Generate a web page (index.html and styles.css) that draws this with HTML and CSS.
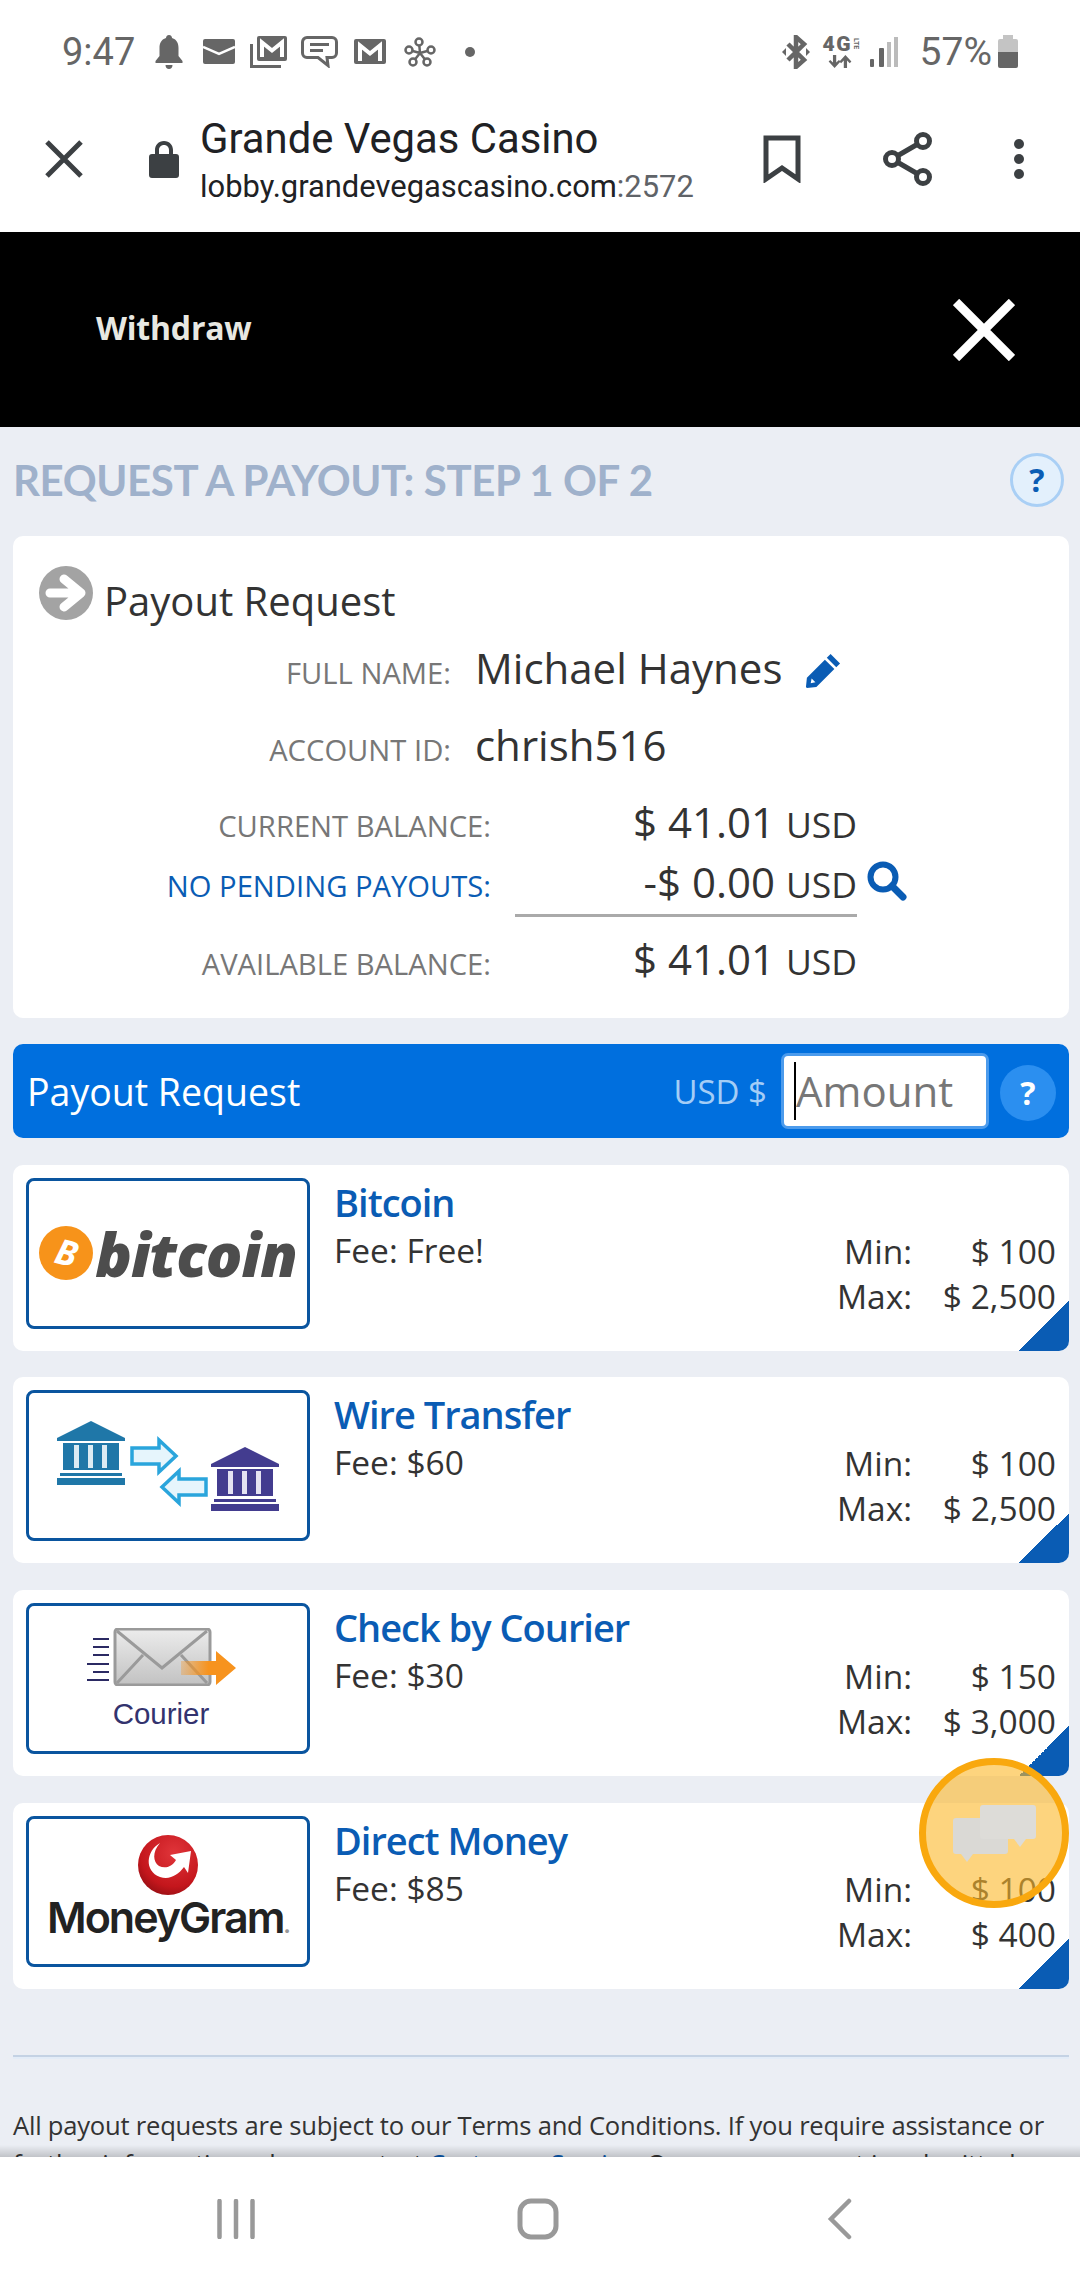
FILE: index.html
```html
<!DOCTYPE html>
<html lang="en">

<head>
  <meta charset="UTF-8">
  <meta name="viewport" content="width=device-width, initial-scale=1.0">
  <title>Withdraw</title>
  <link rel="stylesheet" href="styles.css">
</head>

<body>
  <div class="phone">
    <div class="status-bar">
      <span class="clock">9:47</span>
      <svg class="st-icon" width="28" height="34" viewBox="0 0 28 34"><path fill="#666" d="M14 0c2 0 3 1.500 3 3 5 1.500 6.500 5.500 6.500 10v8l4 5v2H.5v-2l4-5v-8C4.500 8.500 6 4.500 11 3c0-1.500 1-3 3-3zM10.500 30h7c0 2.500-1.500 4-3.500 4s-3.500-1.500-3.500-4z"/></svg>
      <svg class="st-icon gap-20" width="32" height="25" viewBox="0 0 32 25"><rect width="32" height="25" rx="2" fill="#666"/><path d="M0 8l16 7 16-7" fill="none" stroke="#fff" stroke-width="2.500"/></svg>
      <svg class="st-icon gap-15" width="37" height="32" viewBox="0 0 37 32"><path d="M1.500 8v22.500H31" fill="none" stroke="#666" stroke-width="3"/><rect x="7" y="0" width="30" height="25" rx="2" fill="#666"/><path d="M12 21V6.500l10 8 10-8V21" fill="none" stroke="#fff" stroke-width="4"/></svg>
      <svg class="st-icon gap-14" width="37" height="32" viewBox="0 0 37 32"><g fill="none" stroke="#666" stroke-width="3"><path d="M6 1.500h25a4.500 4.500 0 0 1 4.500 4.500v11a4.500 4.500 0 0 1-4.500 4.500h-5l1 8-10-8H6A4.500 4.500 0 0 1 1.500 17V6A4.500 4.500 0 0 1 6 1.500z"/><path d="M9 8.500h19M9 14.500h13"/></g></svg>
      <svg class="st-icon gap-16" width="32" height="25" viewBox="0 0 32 25"><rect width="32" height="25" rx="2" fill="#666"/><path d="M6 22V6.500l10 8 10-8V22" fill="none" stroke="#fff" stroke-width="4"/></svg>
      <svg class="st-icon gap-18" width="32" height="30" viewBox="0 0 32 30"><g fill="#fff" stroke="#666" stroke-width="2.500"><path d="M16 16L15 5M16 16L5 13M16 16L27 13M16 16L9 25M16 16L23 25"/><circle cx="15" cy="5" r="3.500"/><circle cx="5" cy="13" r="3.500"/><circle cx="27" cy="13" r="3.500"/><circle cx="9" cy="25" r="3.500"/><circle cx="23" cy="25" r="3.500"/></g></svg>
      <span class="dot"></span>
      <span class="st-spacer"></span>
      <svg class="st-icon" width="28" height="34" viewBox="0 0 28 34"><g fill="none" stroke="#666" stroke-width="4.500"><path d="M6 9l16 16-8 7V2l8 7L6 25"/></g><path d="M0 17l4-4v8zM28 17l-4-4v8z" fill="#666"/></svg>
      <span class="net gap-13">
        <span class="net-top"><span class="net-4g">4G</span><span class="net-lte">LTE</span></span>
        <svg class="net-arrows" width="24" height="13" viewBox="6 20 21 12"><path fill="#666" d="M10 20h3v7l2.500-2.500L17 26l-5.500 6L6 26l1.500-1.500L10 27zM23 32h-3v-7l-2.500 2.500L16 26l5.500-6 5.500 6-1.500 1.500L23 25z"/></svg>
      </span>
      <svg class="st-icon gap-7" width="28" height="30" viewBox="0 0 28 30"><g fill="#666"><rect x="0" y="22" width="4" height="8" rx="1"/><rect x="9" y="11" width="5" height="19" rx="1"/></g><g fill="#bbb"><rect x="17" y="5" width="4" height="25"/><rect x="24" y="0" width="4" height="30"/></g></svg>
      <span class="battery-text">57%</span>
      <svg class="st-icon battery" width="20" height="33" viewBox="0 0 20 33"><path fill="#c4c4c4" d="M5 0h10v4h3a2 2 0 0 1 2 2v11H0V6a2 2 0 0 1 2-2h3z"/><path fill="#666" d="M0 17h20v14a2 2 0 0 1-2 2H2a2 2 0 0 1-2-2z"/></svg>
    </div>

    <div class="toolbar">
      <svg class="tb-close" width="38" height="38" viewBox="0 0 38 38"><path d="M2 2l34 34M36 2L2 36" stroke="#3c4043" stroke-width="5" fill="none"/></svg>
      <svg class="tb-lock" width="30" height="37" viewBox="0 0 30 37"><path fill="#3c4043" d="M15 0c5.500 0 9 4 9 9v4h3a3 3 0 0 1 3 3v18a3 3 0 0 1-3 3H3a3 3 0 0 1-3-3V16a3 3 0 0 1 3-3h3V9c0-5 3.500-9 9-9zm0 4c-3 0-5 2.200-5 5v4h10V9c0-2.800-2-5-5-5z"/></svg>
      <div class="tb-title">
        <div class="tb-name">Grande Vegas Casino</div>
        <div class="tb-url">lobby.grandevegascasino.com<span class="tb-port">:2572</span></div>
      </div>
      <svg class="tb-bookmark" width="38" height="48" viewBox="0 0 38 48"><path d="M3 3h32v41L19 33 3 44z" fill="none" stroke="#3c4043" stroke-width="5"/></svg>
      <svg class="tb-share" width="50" height="54" viewBox="0 0 50 54"><g fill="none" stroke="#3c4043" stroke-width="5"><circle cx="40" cy="9" r="6.500"/><circle cx="9" cy="27" r="6.500"/><circle cx="40" cy="45" r="6.500"/><path d="M15 23.500l19-11M15 30.500l19 11"/></g></svg>
      <svg class="tb-more" width="12" height="42" viewBox="0 0 12 42"><g fill="#3c4043"><circle cx="6" cy="6" r="5"/><circle cx="6" cy="21" r="5"/><circle cx="6" cy="36" r="5"/></g></svg>
    </div>

    <div class="modal-head">
      <span class="modal-title">Withdraw</span>
      <svg width="62" height="62" viewBox="0 0 62 62"><path d="M3 3l56 56M59 3L3 59" stroke="#fff" stroke-width="9" fill="none"/></svg>
    </div>

    <div class="content">
      <div class="step-row">
        <h1 class="step-title">REQUEST A PAYOUT: STEP 1 OF 2</h1>
        <span class="help-light">?</span>
      </div>

      <section class="card">
        <div class="card-head">
          <svg width="54" height="54" viewBox="0 0 54 54"><circle cx="27" cy="27" r="27" fill="#a3a3a3"/><path d="M11 27h30M25 13l17 14-17 14" fill="none" stroke="#fff" stroke-width="9" stroke-linecap="round" stroke-linejoin="round"/></svg>
          <span>Payout Request</span>
        </div>
        <div class="identity">
          <span class="lbl">FULL NAME:</span>
          <span class="val">Michael Haynes
            <svg class="pencil" width="36" height="36" viewBox="0 0 38 38"><path fill="#0a5cb4" d="M27 1l10 10-4 4-10-10zM21 7l10 10-19 19-10 1-1-1 1-10z"/><path fill="#fff" d="M7 27l4 4-5 1z"/></svg>
          </span>
          <span class="lbl">ACCOUNT ID:</span>
          <span class="val">chrish516</span>
        </div>
        <div class="balances">
          <span class="lbl">CURRENT BALANCE:</span>
          <span class="amt">$ 41.01 <small>USD</small></span>
          <span class="lbl lbl-blue">NO PENDING PAYOUTS:</span>
          <span class="amt amt-line">-$ 0.00 <small>USD</small>
            <svg class="search" width="40" height="40" viewBox="0 0 40 40"><circle cx="16" cy="16" r="12.500" fill="none" stroke="#0a5cb4" stroke-width="6"/><path d="M25 25l11 11" stroke="#0a5cb4" stroke-width="7" stroke-linecap="round"/></svg>
          </span>
          <span class="lbl lbl-last">AVAILABLE BALANCE:</span>
          <span class="amt">$ 41.01 <small>USD</small></span>
        </div>
      </section>

      <div class="request-bar">
        <span class="request-title">Payout Request</span>
        <span class="request-cur">USD $</span>
        <div class="amount-box"><span class="caret"></span>Amount</div>
        <span class="help-blue">?</span>
      </div>

      <div class="method">
        <div class="logo logo-bitcoin">
          <svg width="54" height="54" viewBox="0 0 54 54"><circle cx="27" cy="27" r="27" fill="#f7931a"/><text x="27" y="39" font-family="Open Sans" font-weight="700" font-size="35" fill="#fff" text-anchor="middle" transform="rotate(14 27 27)">B</text></svg>
          <span>bitcoin</span>
        </div>
        <div class="method-info">
          <div class="method-name">Bitcoin</div>
          <div class="method-fee">Fee: Free!</div>
        </div>
        <div class="limits">
          <span>Min:</span><span>$ 100</span>
          <span>Max:</span><span>$ 2,500</span>
        </div>
        <span class="corner"></span>
      </div>

      <div class="method">
        <div class="logo">
          <svg width="222" height="90" viewBox="0 0 222 90">
            <g fill="#1f77a8">
              <path d="M0 17L34 0l34 17v3H0z"/>
              <path d="M6 22h56v27H6z"/>
              <path d="M3 52h62v3H3zM0 57h68v7H0z"/>
            </g>
            <path d="M17 24h5v23h-5zM31 24h5v23h-5zM45 24h5v23h-5z" fill="#dcebf3"/>
            <g fill="#e6f5fc" stroke="#2aa5dc" stroke-width="3.500">
              <path d="M75 27h27v-8l17 16-17 16v-8H75z"/>
              <path d="M149 58h-27v-8l-17 16 17 16v-8h27z"/>
            </g>
            <g transform="translate(154 26)">
              <g fill="#433c8f">
                <path d="M0 17L34 0l34 17v3H0z"/>
                <path d="M6 22h56v27H6z"/>
                <path d="M3 52h62v3H3zM0 57h68v7H0z"/>
              </g>
              <path d="M17 24h5v23h-5zM31 24h5v23h-5zM45 24h5v23h-5z" fill="#e4e2f1"/>
            </g>
          </svg>
        </div>
        <div class="method-info">
          <div class="method-name">Wire Transfer</div>
          <div class="method-fee">Fee: $60</div>
        </div>
        <div class="limits">
          <span>Min:</span><span>$ 100</span>
          <span>Max:</span><span>$ 2,500</span>
        </div>
        <span class="corner"></span>
      </div>

      <div class="method">
        <div class="logo logo-courier">
          <svg width="149" height="58" viewBox="0 0 149 58">
            <defs>
              <linearGradient id="env" x1="0" y1="0" x2="0" y2="1"><stop offset="0" stop-color="#ececec"/><stop offset="1" stop-color="#c2c2c2"/></linearGradient>
              <linearGradient id="arr" x1="0" y1="0" x2="1" y2="0"><stop offset="0" stop-color="#f7931e" stop-opacity=".3"/><stop offset=".5" stop-color="#f7931e"/></linearGradient>
            </defs>
            <g fill="#2b2a63"><path d="M6 10h16v2H6zM6 18h16v2H6zM6 26h16v2H6zM0 35h22v2H0zM6 43h16v2H6zM0 51h22v2H0z"/></g>
            <rect x="28" y="1" width="95" height="56" rx="3" fill="url(#env)" stroke="#9a9a9a" stroke-width="3"/>
            <path d="M30 3l45 37 45-37M30 55l26-28M120 55L94 27" fill="none" stroke="#9a9a9a" stroke-width="3"/>
            <path d="M94 33h35V23l20 17-20 17V47H94z" fill="url(#arr)"/>
          </svg>
          <span>Courier</span>
        </div>
        <div class="method-info">
          <div class="method-name">Check by Courier</div>
          <div class="method-fee">Fee: $30</div>
        </div>
        <div class="limits">
          <span>Min:</span><span>$ 150</span>
          <span>Max:</span><span>$ 3,000</span>
        </div>
        <span class="corner"></span>
      </div>

      <div class="method">
        <div class="logo logo-mg">
          <svg width="60" height="60" viewBox="0 0 60 60">
            <defs>
              <radialGradient id="globe" cx=".6" cy=".3" r=".8"><stop offset="0" stop-color="#e0353a"/><stop offset=".7" stop-color="#c4161c"/><stop offset="1" stop-color="#8c0d12"/></radialGradient>
            </defs>
            <circle cx="30" cy="30" r="30" fill="url(#globe)"/>
            <path d="M22 8C8 16 6 36 22 42c10 3 18-2 24-10l4 6 3-22-21 4 6 5c-4 7-11 9-17 6C15 27 14 17 22 8z" fill="#fff"/>
          </svg>
          <span>MoneyGram<small>.</small></span>
        </div>
        <div class="method-info">
          <div class="method-name">Direct Money</div>
          <div class="method-fee">Fee: $85</div>
        </div>
        <div class="limits">
          <span>Min:</span><span>$ 100</span>
          <span>Max:</span><span>$ 400</span>
        </div>
        <span class="corner"></span>
      </div>

      <div class="divider"></div>

      <p class="terms">All payout requests are subject to our Terms and Conditions. If you require assistance or further information, please contact <a href="javascript:;">Customer Service</a>. Once your request is submitted</p>

      <div class="chat-float">
        <svg width="83" height="57" viewBox="0 0 83 57"><path fill="#dad9d5" d="M3 13h49a3 3 0 0 1 3 3v30a3 3 0 0 1-3 3H20l-6 8-6-8H3a3 3 0 0 1-3-3V16a3 3 0 0 1 3-3z"/><path fill="#dddcd8" d="M30 0h50a3 3 0 0 1 3 3v28a3 3 0 0 1-3 3h-7l-6 8-6-8H30a3 3 0 0 1-3-3V3a3 3 0 0 1 3-3z"/></svg>
      </div>
    </div>

    <nav class="nav-bar">
      <svg width="38" height="40" viewBox="0 0 38 40"><path d="M2.500 2v36M19 2v36M35.500 2v36" stroke="#999" stroke-width="4.500" stroke-linecap="round" fill="none"/></svg>
      <svg class="nav-home" width="42" height="42" viewBox="0 0 42 42"><rect x="3" y="3" width="36" height="36" rx="11" fill="none" stroke="#999" stroke-width="5"/></svg>
      <svg class="nav-back" width="26" height="42" viewBox="0 0 26 42"><path d="M22 3L4 21l18 18" fill="none" stroke="#999" stroke-width="4.500" stroke-linecap="round"/></svg>
    </nav>
  </div>
</body>

</html>
```

FILE: styles.css
```css
* {
  padding: 0;
  margin: 0;
  box-sizing: border-box;
}

body {
  background-color: #fff;
  font-family: "Open Sans", "Liberation Sans", sans-serif;
  color: #333;
}

.phone {
  width: 1080px;
  height: 2280px;
  display: flex;
  flex-direction: column;
  overflow: hidden;
}

/* status bar */
.status-bar {
  height: 100px;
  flex: none;
  display: flex;
  align-items: center;
  padding: 3px 62px 0;
  font-family: Roboto, sans-serif;
  color: #666;
}

.clock {
  font-size: 38px;
  width: 93px;
}

.st-icon {
  flex: none;
}

.net {
  width: 40px;
  height: 32px;
  flex: none;
  display: flex;
  flex-direction: column;
  align-items: flex-start;
}

.net-top {
  display: flex;
  align-items: center;
  height: 17px;
}

.net-4g {
  font-weight: 900;
  font-size: 21px;
  letter-spacing: 1.5px;
  line-height: 17px;
}

.net-lte {
  font-weight: 700;
  font-size: 7px;
  line-height: 6px;
  margin-left: 1px;
  writing-mode: vertical-rl;
}

.net-arrows {
  margin: 2px 0 0 5px;
}

.gap-7 { margin-left: 7px; }
.gap-13 { margin-left: 13px; }
.gap-14 { margin-left: 14px; }
.gap-15 { margin-left: 15px; }
.gap-16 { margin-left: 16px; }
.gap-18 { margin-left: 18px; }
.gap-20 { margin-left: 20px; }

.dot {
  width: 10px;
  height: 10px;
  border-radius: 50%;
  background-color: #666;
  margin-left: 29px;
}

.st-spacer {
  flex: 1;
}

.battery-text {
  font-size: 39px;
  margin-left: 22px;
}

.battery {
  margin-left: 6px;
}

/* browser toolbar */
.toolbar {
  height: 132px;
  flex: none;
  display: flex;
  align-items: center;
  font-family: Roboto, sans-serif;
  color: #202124;
  padding: 0 0 14px 45px;
}

.tb-lock {
  margin-left: 66px;
}

.tb-title {
  margin-left: 21px;
  width: 540px;
  padding-top: 3px;
}

.tb-name {
  font-size: 41.8px;
  line-height: 50px;
}

.tb-url {
  font-size: 30.9px;
  line-height: 40px;
  margin-top: 3px;
}

.tb-port {
  color: #5f6368;
}

.tb-bookmark {
  margin-left: 23px;
}

.tb-share {
  margin-left: 82px;
}

.tb-more {
  margin-left: 80px;
}

/* withdraw header */
.modal-head {
  height: 195px;
  flex: none;
  background-color: #000;
  display: flex;
  align-items: center;
  justify-content: space-between;
  padding: 0 65px 0 96px;
}

.modal-title {
  font-size: 32px;
  font-weight: 700;
  letter-spacing: -0.2px;
  color: #e8e8e2;
  margin-bottom: 4px;
}

/* page content */
.content {
  flex: 1;
  min-height: 0;
  background-color: #ebeef4;
  padding: 0 11px 0 13px;
  position: relative;
  overflow: hidden;
}

.step-row {
  height: 109px;
  padding: 0 5px 4px 0;
  display: flex;
  align-items: center;
  justify-content: space-between;
}

.step-title {
  font-family: Lato, sans-serif;
  font-size: 42px;
  font-weight: 700;
  color: #9fb1cb;
  letter-spacing: -0.4px;
}

.help-light {
  width: 54px;
  height: 54px;
  border-radius: 50%;
  border: 3px solid #a9cff5;
  background-color: #e3f0fc;
  color: #0a5cb4;
  font-size: 32px;
  font-weight: 700;
  display: flex;
  align-items: center;
  justify-content: center;
}

.card {
  background-color: #fff;
  border-radius: 10px;
  height: 482px;
  padding: 30px 0 0 26px;
}

.card-head {
  display: flex;
  align-items: flex-start;
  gap: 11px;
  font-size: 40px;
  height: 66px;
  color: #333;
}

.card-head span {
  padding-top: 7px;
}

.identity {
  display: grid;
  grid-template-columns: 412px auto;
  column-gap: 24px;
  margin-top: 3px;
  justify-content: start;
}

.identity .lbl,
.identity .val {
  height: 77px;
  line-height: 64px;
}

.identity .lbl {
  padding-top: 6px;
}

.identity .val {
  padding-top: 1px;
}

.lbl {
  font-size: 29.2px;
  color: #777;
  text-align: right;
}

.lbl-blue {
  color: #0a5cb4;
}

.val {
  font-size: 42px;
  color: #333;
}

.pencil {
  margin-left: 12px;
  vertical-align: -5px;
}

.balances {
  display: grid;
  grid-template-columns: 452px 342px;
  column-gap: 24px;
  margin-top: 4px;
}

.balances .lbl {
  height: 60px;
  line-height: 66px;
}

.balances .lbl-last {
  line-height: 69px;
}

.amt {
  font-size: 42px;
  text-align: right;
  position: relative;
  line-height: 58px;
  color: #333;
}

.amt small {
  font-size: 35.5px;
}

.amt-line {
  border-bottom: 3px solid #aaa;
  height: 64px;
  margin-bottom: 13px;
}

.search {
  position: absolute;
  left: 352px;
  top: 8px;
}

/* amount bar */
.request-bar {
  height: 94px;
  margin-top: 26px;
  background-color: #006fde;
  border-radius: 10px;
  display: flex;
  align-items: center;
  padding: 0 13px 0 14px;
  color: #fff;
}

.request-title {
  font-size: 37.5px;
  flex: 1;
}

.request-cur {
  font-size: 33px;
  color: #a4cdf6;
}

.amount-box {
  width: 208px;
  height: 76px;
  margin-left: 14px;
  background-color: #fff;
  border: 3px solid #4c9bec;
  border-radius: 7px;
  font-size: 42px;
  line-height: 66px;
  color: #777;
  padding-left: 10px;
  display: flex;
  align-items: center;
}

.caret {
  width: 2px;
  height: 58px;
  background-color: #000;
  flex: none;
}

.help-blue {
  width: 56px;
  height: 56px;
  margin: 3px 0 0 11px;
  border-radius: 50%;
  background-color: #2b8ff0;
  color: #fff;
  font-size: 32px;
  font-weight: 700;
  display: flex;
  align-items: center;
  justify-content: center;
}

/* payment rows */
.method {
  height: 186px;
  margin-top: 26.67px;
  background-color: #fff;
  border-radius: 10px;
  display: flex;
  padding: 13px 13px;
  position: relative;
  overflow: hidden;
}

.logo {
  width: 284px;
  height: 151px;
  flex: none;
  border: 3px solid #0a559f;
  border-radius: 8px;
  display: flex;
  align-items: center;
  justify-content: center;
}

.logo-bitcoin {
  gap: 2px;
  font-size: 60.5px;
  font-weight: 800;
  font-style: italic;
  color: #4d4d4d;
  letter-spacing: -1px;
}

.logo-courier {
  flex-direction: column;
  gap: 14px;
  font-family: "Liberation Sans", sans-serif;
  font-size: 29.5px;
  line-height: 28px;
  color: #33336e;
  padding-right: 14px;
}

.logo-mg {
  flex-direction: column;
  font-family: Inter, sans-serif;
  font-size: 43px;
  font-weight: 600;
  color: #222;
  letter-spacing: -2px;
  line-height: 44px;
}

.logo-mg small {
  color: #999;
  font-size: 24px;
}

.method-info {
  margin-left: 24px;
  padding-top: 1px;
  flex: 1;
}

.method-name {
  font-size: 38px;
  font-weight: 600;
  color: #0a5cb4;
  letter-spacing: -1px;
  line-height: 46px;
}

.method-fee {
  font-size: 33.5px;
  line-height: 44px;
  margin-top: 3px;
  color: #333;
}

.limits {
  display: grid;
  grid-template-columns: auto 144px;
  grid-auto-rows: 45px;
  justify-items: end;
  align-self: flex-start;
  margin-top: 51px;
  font-size: 33.5px;
  line-height: 45px;
  color: #333;
}

.corner {
  position: absolute;
  right: 0;
  bottom: 0;
  width: 50px;
  height: 50px;
  background: linear-gradient(to bottom right, transparent 50%, #0a5cb4 50%);
}

/* footer text */
.divider {
  height: 4px;
  margin-top: 66px;
  background-color: #c4d2e4;
  border-bottom: 2px solid #e3ecf7;
}

.terms {
  font-size: 25.6px;
  line-height: 38px;
  color: #333;
  margin-top: 48px;
  letter-spacing: -0.23px;
}

.terms a {
  color: #0a5cb4;
  text-decoration: none;
}

.chat-float {
  position: absolute;
  left: 919px;
  top: 1331px;
  width: 150px;
  height: 150px;
  border-radius: 50%;
  border: 7px solid #f9a80e;
  background-color: rgba(252, 183, 40, 0.6);
  display: flex;
  align-items: center;
  justify-content: center;
}

/* bottom navigation */
.nav-bar {
  height: 123px;
  flex: none;
  background-color: #fff;
  position: relative;
  display: flex;
  align-items: center;
  padding-left: 217px;
}

.nav-bar::before {
  content: "";
  position: absolute;
  left: 0;
  right: 0;
  top: -12px;
  height: 12px;
  background: linear-gradient(to bottom, rgba(0, 0, 0, 0), rgba(0, 0, 0, 0.18));
}

.nav-home {
  margin-left: 262px;
}

.nav-back {
  margin-left: 268px;
}
```
